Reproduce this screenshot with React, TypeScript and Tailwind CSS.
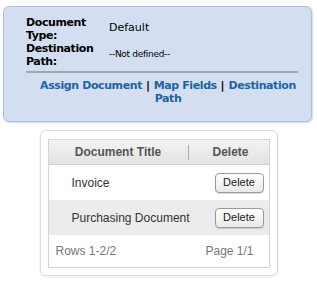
import React from 'react';

type Doc = { id: number; title: string };

const docs: Doc[] = [
  { id: 1, title: 'Invoice' },
  { id: 2, title: 'Purchasing Document' },
];

const App: React.FC = () => {
  return (
    <div className="w-[317px] h-[283px] bg-white flex flex-col">
      {/* route summary */}
      <div className="ml-[3px] mt-[6px] w-[309px] h-[116px] rounded-[6px] border border-[#a9c1e4] bg-[#d3dff0] shadow-[1px_1px_2px_rgba(0,0,0,0.15)] pl-[22px] pr-[13px] pt-[9px] font-['DejaVu_Sans',sans-serif]">
        <table className="border-collapse">
          <tbody>
            <tr>
              <td className="w-[83px] align-middle text-[11px] leading-[13px] font-bold tracking-[-0.4px] text-black">
                Document
                <br />
                Type:
              </td>
              <td className="align-middle text-[11px] text-black pb-[1px]">Default</td>
            </tr>
            <tr>
              <td className="align-middle text-[11px] leading-[13px] font-bold tracking-[-0.4px] text-black">
                Destination
                <br />
                Path:
              </td>
              <td className="align-middle text-[9px] text-black tracking-[-0.3px]">--Not defined--</td>
            </tr>
          </tbody>
        </table>
        <div className="mt-[3px] border-t-2 border-[#a3a7ad]" />
        <div className="mt-[6px] text-center text-[11px] leading-[13px] font-bold text-[#1b63a6] pl-[12px]">
          <a className="cursor-pointer tracking-[-0.4px]">Assign Document</a>{' '}
          <span className="text-black">|</span>{' '}
          <a className="cursor-pointer tracking-[-0.4px]">Map Fields</a>{' '}
          <span className="text-black">|</span>{' '}
          <a className="cursor-pointer tracking-[-0.4px]">Destination Path</a>
        </div>
      </div>

      {/* documents grid */}
      <div className="mx-auto mt-[8px] w-[238px] rounded-[6px] border border-[#dcdcdc] p-[7px] pt-[8px] shadow-[0_1px_3px_rgba(0,0,0,0.08)] font-['Liberation_Sans',Arial,sans-serif]">
        <div className="border border-[#d4d4d4]">
          <div className="flex h-[25px] items-center bg-gradient-to-b from-[#f4f4f4] to-[#e2e2e2] border-b border-[#d0d0d0] text-[12px] font-bold text-[#555]">
            <div className="flex-1 text-center">Document Title</div>
            <div className="w-px h-[15px] bg-[#aaa]" />
            <div className="w-[80px] pl-[24px]">Delete</div>
          </div>
          {docs.map((d, i) => (
            <div
              key={d.id}
              className={`flex h-[35px] items-center text-[12px] text-[#333] ${i % 2 === 1 ? 'bg-[#ececec]' : 'bg-white'}`}
            >
              <div className="flex-1 pl-[23px]">{d.title}</div>
              <button className="mr-[5px] h-[20px] w-[49px] rounded-[4px] border border-[#9a9a9a] bg-gradient-to-b from-white to-[#e9e9e9] text-[11px] text-[#222] shadow-[0_1px_1px_rgba(0,0,0,0.15)]">
                Delete
              </button>
            </div>
          ))}
          <div className="flex h-[32px] items-center justify-between pl-[7px] pr-[15px] text-[12px] text-[#777] bg-white">
            <span>Rows 1-2/2</span>
            <span>Page 1/1</span>
          </div>
        </div>
      </div>
    </div>
  );
};

export default App;
